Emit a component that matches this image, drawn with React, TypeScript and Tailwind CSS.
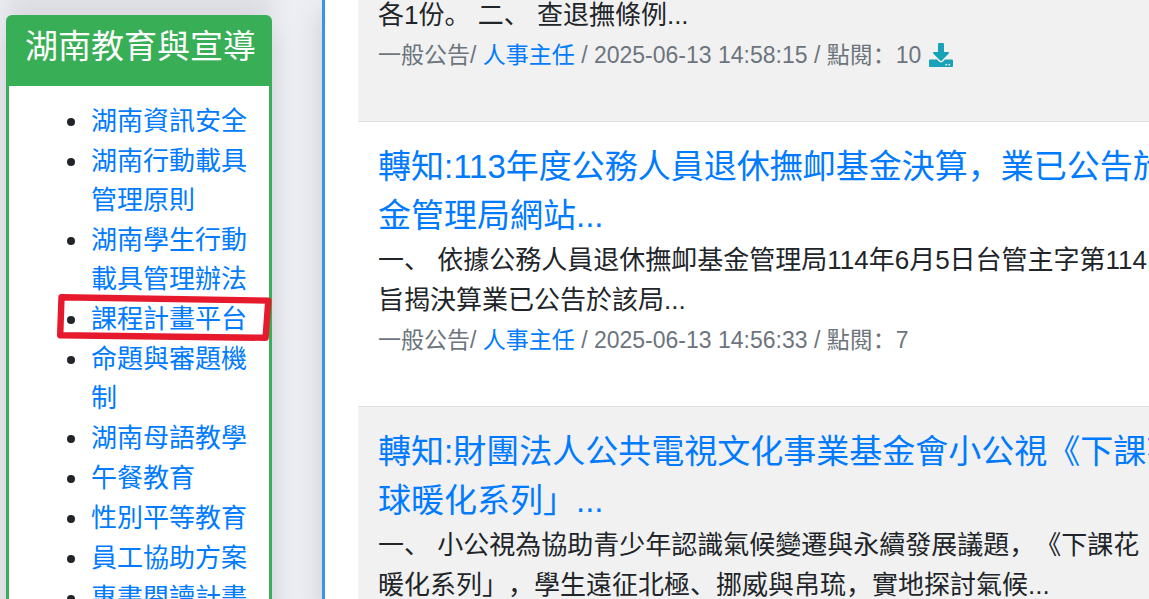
import { FaDownload } from "react-icons/fa";

type SideLink = {
  label: string;
  marked?: boolean;
};

type Post = {
  id: number;
  title?: string[];
  body: string[];
  date?: string;
  views?: number;
  hasFile?: boolean;
};

const sideLinks: SideLink[] = [
  { label: "湖南資訊安全" },
  { label: "湖南行動載具管理原則" },
  { label: "湖南學生行動載具管理辦法" },
  { label: "課程計畫平台", marked: true },
  { label: "命題與審題機制" },
  { label: "湖南母語教學" },
  { label: "午餐教育" },
  { label: "性別平等教育" },
  { label: "員工協助方案" },
  { label: "專書閱讀計畫" },
];

const posts: Post[] = [
  {
    id: 1,
    body: ["各1份。 二、 查退撫條例..."],
    date: "2025-06-13 14:58:15",
    views: 10,
    hasFile: true,
  },
  {
    id: 2,
    title: ["轉知:113年度公務人員退休撫卹基金決算，業已公告於", "金管理局網站..."],
    body: [
      "一、 依據公務人員退休撫卹基金管理局114年6月5日台管主字第114",
      "旨揭決算業已公告於該局...",
    ],
    date: "2025-06-13 14:56:33",
    views: 7,
  },
  {
    id: 3,
    title: ["轉知:財團法人公共電視文化事業基金會小公視《下課花", "球暖化系列」..."],
    body: [
      "一、 小公視為協助青少年認識氣候變遷與永續發展議題，《下課花",
      "暖化系列」，學生遠征北極、挪威與帛琉，實地探討氣候...",
    ],
  },
];

// Hand-drawn red frame around the highlighted link
function RedFrame() {
  return (
    <svg
      className="pointer-events-none absolute -left-9 -top-2 h-[52px] w-[220px]"
      viewBox="55 292 220 52"
      fill="none"
      aria-hidden="true"
    >
      <path
        d="M61.5 297.3 L268.3 300.6 L265.6 337.8 L60.2 335.2 Z"
        stroke="#e6192d"
        strokeWidth="6.4"
        strokeLinejoin="round"
      />
    </svg>
  );
}

function Sidebar() {
  return (
    <aside className="w-[322px] shrink-0 pl-[6px] pr-[50px]">
      {/* Bottom edge of the card above */}
      <div className="-mt-[15px] mb-[15px] h-[15px] rounded-md bg-white shadow-[0_13px_26px_rgba(0,0,0,0.15)]" />

      <section className="rounded-md border-[3px] border-[#38ae56] bg-white shadow-[0_13px_26px_rgba(0,0,0,0.15)]">
        <h2 className="h-[68px] bg-[#38ae56] pl-4 pt-1 text-[33px] leading-[50px] whitespace-nowrap text-white">
          湖南教育與宣導
        </h2>
        <ul className="flex list-none flex-col gap-px pb-5 pl-[82px] pr-4 pt-4 text-[26px] leading-[39px]">
          {sideLinks.map((link) => (
            <li key={link.label} className="relative">
              <span className="absolute -left-6 top-4 size-2 rounded-full bg-[#212529]" />
              <a href="#" className="text-[#007bff] hover:underline">
                {link.label}
              </a>
              {link.marked && <RedFrame />}
            </li>
          ))}
        </ul>
      </section>
    </aside>
  );
}

function PostItem({ post }: { post: Post }) {
  return (
    <article className="border-b border-[#dee2e6] px-5 pb-[46px] odd:bg-[#f1f1f1]">
      {post.title && (
        <h3 className="pt-5 text-[33px] leading-[49px]">
          <a href="#" className="text-[#007bff] hover:underline">
            {post.title.map((line) => (
              <span key={line} className="block">
                {line}
              </span>
            ))}
          </a>
        </h3>
      )}
      <div className="text-[26px] leading-10">
        {post.body.map((line) => (
          <p key={line}>{line}</p>
        ))}
      </div>
      {post.date && (
        <p className="flex items-center text-[23px] leading-10 text-[#6c757d]">
          <span className="whitespace-pre">
            一般公告/{" "}
            <a href="#" className="text-[#007bff] hover:underline">
              人事主任
            </a>
            {" / "}
            {post.date}
            {" / 點閱："}
            {post.views}
          </span>
          {post.hasFile && <FaDownload className="ml-2 size-6 text-[#17a2b8]" />}
        </p>
      )}
    </article>
  );
}

export default function App() {
  return (
    <div
      lang="zh-Hans"
      className="flex h-screen overflow-hidden bg-[#edeef4] font-['Liberation_Sans','Noto_Sans_CJK_SC',sans-serif] text-[#212529] [text-spacing-trim:space-all]"
    >
      <Sidebar />
      <main className="min-w-0 flex-1 border-l-[3px] border-[#3c95e0] bg-white pl-[33px] shadow-[0_13px_26px_rgba(0,0,0,0.15)]">
        {/* The list runs past the right edge of the window */}
        <div className="-mt-[5px] whitespace-nowrap">
          {posts.map((post) => (
            <PostItem key={post.id} post={post} />
          ))}
        </div>
      </main>
    </div>
  );
}
